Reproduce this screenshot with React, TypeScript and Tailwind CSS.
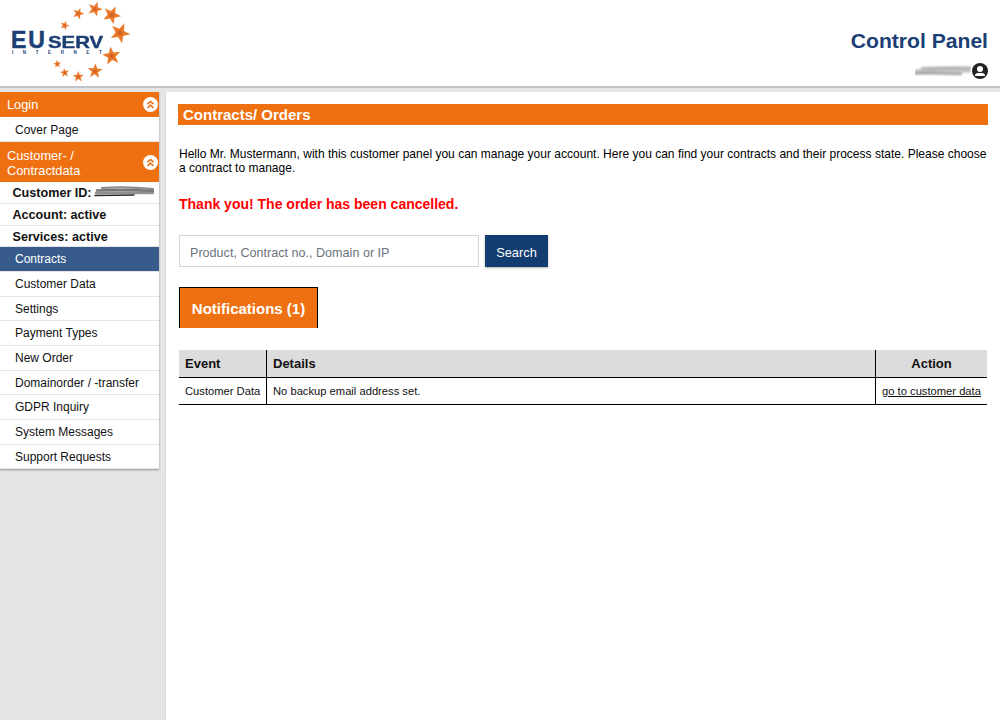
import React from "react";

const starPoints = (cx: number, cy: number, r: number, rot: number) => {
  const pts: string[] = [];
  for (let i = 0; i < 10; i++) {
    const rad = i % 2 === 0 ? r : r * 0.42;
    const a = ((rot + i * 36 - 90) * Math.PI) / 180;
    pts.push(`${(cx + rad * Math.cos(a)).toFixed(1)},${(cy + rad * Math.sin(a)).toFixed(1)}`);
  }
  return pts.join(" ");
};

const stars: [number, number, number, number][] = [
  [64.7, 25.5, 4.8, 20], [78.3, 13.5, 6, 20], [95, 9, 7.8, 20], [111.7, 15, 9.5, 25], [120, 33, 10.5, 25],
  [111.7, 56, 9.5, -8], [95, 71, 7.8, 5], [78.3, 76.7, 5.8, 0], [64.7, 72.7, 4.8, -8], [57.3, 64, 4.2, -8],
];

function Logo() {
  return (
    <div className="relative w-[140px] h-[86px] shrink-0">
      <svg width="140" height="86" className="absolute left-0 top-0">
        {stars.map(([x, y, r, rot], i) => (
          <g key={i}>
            <polygon points={starPoints(x, y, r, rot)} fill="#ea7b2c" />
            <circle cx={x} cy={y} r={r * 0.24} fill="#c9591c" opacity="0.7" />
          </g>
        ))}
      </svg>
      <div className="absolute left-[11px] top-[30px] text-[#1b3f74] font-bold leading-[21px] text-[23px] tracking-[2px] [-webkit-text-stroke:0.5px_#1b3f74] font-['Liberation_Sans',sans-serif]">
        EU
      </div>
      <div className="absolute left-[48px] top-[35px] text-[#1b3f74] font-bold leading-[15px] text-[17px] scale-x-[1.2] origin-left [-webkit-text-stroke:0.4px_#1b3f74] font-['Liberation_Sans',sans-serif]">
        SERV
      </div>
      <div className="absolute left-[12px] top-[51px] text-[4.5px] leading-[4px] font-bold text-[#1b3f74] tracking-[9.6px] font-['Liberation_Sans',sans-serif] whitespace-nowrap">
        INTERNET
      </div>
    </div>
  );
}

function ScribbleTop() {
  return (
    <svg width="56" height="12" className="block">
      <defs>
        <filter id="blurTop" x="-10%" y="-50%" width="120%" height="200%">
          <feGaussianBlur stdDeviation="0.8" />
        </filter>
      </defs>
      <g filter="url(#blurTop)" fill="none" strokeLinecap="round">
        <path d="M7 3.5 Q30 2.5 55 3" stroke="#a8a8a8" strokeWidth="2.5" />
        <path d="M1 6 Q30 5.5 55 6" stroke="#bcbcbc" strokeWidth="3" />
        <path d="M0 8.5 Q22 8 46 9" stroke="#8e8e8e" strokeWidth="2" />
      </g>
    </svg>
  );
}

function ScribbleId() {
  return (
    <svg width="60" height="13" className="block">
      <defs>
        <filter id="blurId" x="-10%" y="-50%" width="120%" height="200%">
          <feGaussianBlur stdDeviation="0.7" />
        </filter>
      </defs>
      <g filter="url(#blurId)" fill="none" strokeLinecap="round">
        <path d="M8 3 Q34 1.5 59 4" stroke="#8c8c8c" strokeWidth="2.2" />
        <path d="M3 5.5 Q32 4.5 60 6" stroke="#767676" strokeWidth="2.6" />
        <path d="M2 8 Q32 7.5 59 8" stroke="#909090" strokeWidth="2.4" />
        <path d="M1 10.5 Q20 10 40 10" stroke="#2c2c2c" strokeWidth="1.6" />
      </g>
    </svg>
  );
}

function Collapse() {
  return (
    <span className="w-[15px] h-[15px] rounded-full bg-white flex items-center justify-center shrink-0">
      <svg width="9" height="9" viewBox="0 0 9 9" fill="none" stroke="#ef7010" strokeWidth="1.6">
        <path d="M1.5 4.2 L4.5 1.5 L7.5 4.2" />
        <path d="M1.5 8 L4.5 5.2 L7.5 8" />
      </svg>
    </span>
  );
}

function SideHead({ h, extra = "", children }: { h: string; extra?: string; children: React.ReactNode }) {
  return (
    <div className={`${h} bg-[#ef7010] text-white text-[12.8px] leading-[15px] pl-[7px] pr-[1px] flex items-center justify-between`}>
      <span className={extra}>{children}</span>
      <Collapse />
    </div>
  );
}

function Item({ h, label, active, extra = "" }: { h: string; label: string; active?: boolean; extra?: string }) {
  return (
    <div
      className={`${h} ${extra} pl-[15px] text-[12px] flex items-center border-b border-[#e5e5e5] ${
        active ? "bg-[#375c8c] text-white" : "bg-white text-[#111111]"
      }`}
    >
      {label}
    </div>
  );
}

function Info({ h, extra = "", children }: { h: string; extra?: string; children: React.ReactNode }) {
  return (
    <div className={`${h} ${extra} pl-[12.5px] text-[12.6px] font-bold text-[#111111] flex items-center bg-white border-b border-[#e5e5e5]`}>
      {children}
    </div>
  );
}

export default function App() {
  return (
    <div className="w-[1000px] h-[720px] overflow-hidden bg-[#e5e5e5] flex flex-col font-['Liberation_Sans',Arial,sans-serif]">
      <header className="h-[88px] bg-white border-b-2 border-[#c4c4c4] flex justify-between shrink-0">
        <Logo />
        <div className="flex flex-col items-end pr-[12px] pt-[28px]">
          <div className="text-[#1b3f74] font-bold text-[21.12px] leading-[26px]">Control Panel</div>
          <div className="flex items-center mt-[9px]">
            <ScribbleTop />
            <span className="w-[16px] h-[16px] ml-[1px] rounded-full bg-[#222222] relative overflow-hidden block">
              <span className="absolute left-[5px] top-[3px] w-[6px] h-[6px] rounded-full bg-white" />
              <span className="absolute left-[3px] top-[10px] w-[10px] h-[3px] rounded-t-full bg-white" />
            </span>
          </div>
        </div>
      </header>
      <div className="flex flex-1 pt-[4px] min-h-0">
        <aside className="w-[159px] shrink-0 self-start bg-white shadow-[0_1px_2px_rgba(0,0,0,0.35)]">
          <SideHead h="h-[25px]">Login</SideHead>
          <Item h="h-[25px]" extra="pt-[2px]" label="Cover Page" />
          <SideHead h="h-[40px]" extra="pt-[1px]">
            Customer- /<br />
            Contractdata
          </SideHead>
          <Info h="h-[22px]" extra="pt-[2px]">
            Customer ID:
            <span className="ml-[2px] mb-[5px]">
              <ScribbleId />
            </span>
          </Info>
          <Info h="h-[22px]" extra="pt-[2px]">Account: active</Info>
          <Info h="h-[21px]" extra="pt-[2px]">Services: active</Info>
          <Item h="h-[25px]" label="Contracts" active />
          <Item h="h-[25px]" label="Customer Data" />
          <Item h="h-[24px]" label="Settings" />
          <Item h="h-[25px]" label="Payment Types" />
          <Item h="h-[25px]" label="New Order" />
          <Item h="h-[24px]" label="Domainorder / -transfer" />
          <Item h="h-[25px]" label="GDPR Inquiry" />
          <Item h="h-[25px]" label="System Messages" />
          <Item h="h-[24px]" label="Support Requests" />
        </aside>
        <main className="ml-[6px] flex-1 bg-white border-l border-[#d8d8d8] pl-[12px] pr-[12px] pt-[12px] min-w-0">
          <h1 className="h-[21px] bg-[#ef7010] text-white font-bold text-[15px] leading-[21px] pl-[5px]">Contracts/ Orders</h1>
          <p className="mt-[22px] ml-[1px] text-[12.03px] leading-[14px] text-black">
            Hello Mr. Mustermann, with this customer panel you can manage your account. Here you can find your contracts and their process state. Please choose a contract to manage.
          </p>
          <p className="mt-[21px] ml-[1px] text-[14px] leading-[16px] font-bold text-[#ff0000]">Thank you! The order has been cancelled.</p>
          <div className="mt-[23px] ml-[1px] flex gap-[6px]">
            <div className="w-[300px] h-[32px] border border-[#d1d5db] pl-[10px] pt-[4px] flex items-center text-[12.6px] text-[#6b7280]">
              Product, Contract no., Domain or IP
            </div>
            <div className="w-[63px] h-[32px] pt-[3px] bg-[#133c70] text-white text-[12.8px] flex items-center justify-center shadow-[0_1px_2px_rgba(0,0,0,0.3)]">
              Search
            </div>
          </div>
          <div className="mt-[20px] ml-[1px] w-[139px] h-[41px] pt-[2px] bg-[#ef7010] border-t border-l border-r border-black text-white font-bold text-[15px] flex items-center justify-center">
            Notifications (1)
          </div>
          <div className="mt-[22px] ml-[1px] mr-[1px] text-[#111111]">
            <div className="grid grid-cols-[88px_1fr_111px] h-[28px] bg-[#dcdcdc] border-b border-black text-[13px] font-bold">
              <div className="border-r border-black pl-[6px] flex items-center">Event</div>
              <div className="border-r border-black pl-[6px] flex items-center">Details</div>
              <div className="flex items-center justify-center">Action</div>
            </div>
            <div className="grid grid-cols-[88px_1fr_111px] h-[27px] border-b border-black text-[11.2px]">
              <div className="border-r border-black pl-[6px] flex items-center whitespace-nowrap">Customer Data</div>
              <div className="border-r border-black pl-[6px] flex items-center">No backup email address set.</div>
              <div className="flex items-center justify-center underline whitespace-nowrap">go to customer data</div>
            </div>
          </div>
        </main>
      </div>
    </div>
  );
}
